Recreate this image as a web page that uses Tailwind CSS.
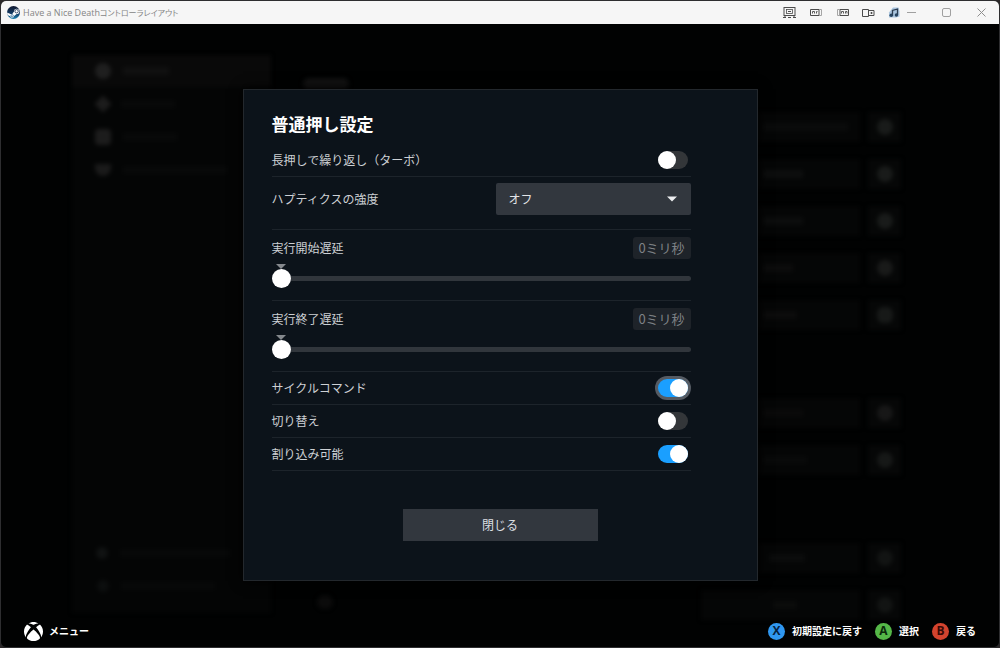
<!DOCTYPE html>
<html lang="ja">
<head>
  <meta charset="UTF-8" />
  <meta name="viewport" content="width=device-width, initial-scale=1.0"/>
  <script src="https://cdn.jsdelivr.net/npm/@tailwindcss/browser@4"></script>
  <title>Have a Nice Deathコントローラレイアウト</title>
</head>
<body class="bg-[#2b2829] font-['Noto_Sans_CJK_JP',sans-serif]">

<div class="min-h-screen flex flex-col rounded-md overflow-hidden border border-[#2e2e30] bg-[#010202]">

  <!-- Title bar -->
  <header class="h-[23px] shrink-0 flex items-center bg-[#f6f6f6] pl-[6px] pr-3">
    <svg class="size-[13px] shrink-0" viewBox="0 0 26 26">
      <defs>
        <linearGradient id="steam" x1="0" y1="0" x2="0" y2="1">
          <stop offset="0" stop-color="#10182f"/>
          <stop offset="0.6" stop-color="#123c66"/>
          <stop offset="1" stop-color="#1c84b4"/>
        </linearGradient>
      </defs>
      <circle cx="13" cy="13" r="13" fill="url(#steam)"/>
      <path d="M0 13l8 3.500a4 4 0 0 1 2.500-.6l3.500-5a5.300 5.300 0 1 1 5.300 5.300l-5 3.600a4 4 0 0 1-7.900.8L1 18z" fill="#fff"/>
      <circle cx="19.200" cy="10.500" r="3.400" fill="#fff" stroke="#14294c" stroke-width="1.600"/>
      <circle cx="10.300" cy="19.600" r="2.400" fill="none" stroke="#17588a" stroke-width="1.400"/>
    </svg>
    <h1 class="ml-[3px] flex items-center text-[9px] leading-none text-[#858585] whitespace-nowrap font-['Open_Sans','Noto_Sans_CJK_JP',sans-serif]">Have a Nice Death<span class="text-[8px] [font-feature-settings:'palt']">コントローラレイアウト</span></h1>

    <div class="ml-auto flex items-center text-[#4c4c4c]">
      <button aria-label="モニター" class="w-[25px] flex justify-center">
        <svg class="w-[13px] h-[11px]" viewBox="0 0 13 11" fill="none" stroke="currentColor"><rect x="1" y="0.500" width="11" height="8" /><rect x="3.500" y="2.500" width="6" height="4" stroke-width="0.800"/><path d="M5 4.500h3M0 10.500h3M5 10.500h3M10 10.500h3M2 8.500v2M11 8.500v2"/></svg>
      </button>
      <button aria-label="左画面" class="w-[27px] flex justify-center">
        <svg class="w-[12px] h-[7px]" viewBox="0 0 12 7" fill="none" stroke="currentColor"><path d="M9 .5H.5v6H9z"/><path d="M9 .5h2.500v6H9" stroke="#a5a5a5"/><path d="M2.500 4.500v-2h2v2M6.500 4.500v-2h1" stroke-width="0.900"/></svg>
      </button>
      <button aria-label="右画面" class="w-[27px] flex justify-center">
        <svg class="w-[12px] h-[7px]" viewBox="0 0 12 7" fill="none" stroke="currentColor"><path d="M3 .5h8.500v6H3z"/><path d="M3 .5H.5v6H3" stroke="#a5a5a5"/><path d="M4.500 4.500v-2h2v2M8.500 4.500v-2h1.500v2" stroke-width="0.900"/></svg>
      </button>
      <button aria-label="画面移動" class="w-[25px] flex justify-center">
        <svg class="w-[13px] h-[8px]" viewBox="0 0 13 8" fill="none" stroke="currentColor"><path d="M.5.5h6v7h-6zM6.500 1.500h5.500v5H6.500z"/><path d="M8.500 4h2M9.500 3v2" stroke-width="1.200"/></svg>
      </button>
      <button aria-label="音声" class="w-[25px] flex justify-center">
        <svg class="w-[12px] h-[11px]" viewBox="0 0 12 11"><path d="M1 5.500L5 .5h5.500l1 4v5L8 10.500H1z" fill="#a9c4de"/><path d="M4.500 8V3.500l5-1.500v6" fill="none" stroke="#2d3d50" stroke-width="1.300"/><circle cx="3.300" cy="8.300" r="1.800" fill="#26435f"/><circle cx="8.400" cy="8" r="1.700" fill="#26435f"/></svg>
      </button>
      <button aria-label="最小化" class="w-[10px] flex justify-center text-[#a0a0a0]">
        <svg class="w-[9px] h-[9px]" viewBox="0 0 9 9" stroke="currentColor"><path d="M0 4.500h9"/></svg>
      </button>
      <button aria-label="最大化" class="w-[60px] flex justify-center text-[#a0a0a0]">
        <svg class="w-[9px] h-[9px]" viewBox="0 0 9 9" fill="none" stroke="currentColor"><rect x=".5" y=".5" width="8" height="8" rx="1.500"/></svg>
      </button>
      <button aria-label="閉じる" class="w-[11px] flex justify-center text-[#8e8e8e]">
        <svg class="w-[9px] h-[9px]" viewBox="0 0 9 9" stroke="currentColor"><path d="M.5.5l8 8M8.500.5l-8 8"/></svg>
      </button>
    </div>
  </header>

  <div class="relative flex-1 flex flex-col">

    <!-- Dimmed page behind the dialog -->
    <div class="absolute inset-0 overflow-hidden flex justify-between pl-[71px] pr-[98px] blur-[2px]" aria-hidden="true">
      <div class="w-[199px] mt-[31px] mb-[34px] flex flex-col bg-[#040505]">
        <div class="h-[32px] flex items-center pl-[23px] gap-3 bg-[#090909]"><i class="size-4 rounded-full bg-[#1f1f1f]"></i><i class="w-[46px] h-2 bg-[#101010]"></i></div>
        <div class="h-[33px] flex items-center pl-[25px] gap-3"><i class="size-3 rotate-45 bg-[#1c1c1c]"></i><i class="w-[54px] h-2 bg-[#080909]"></i></div>
        <div class="h-[33px] flex items-center pl-[23px] gap-3"><i class="size-4 rounded-sm bg-[#1c1c1c]"></i><i class="w-[54px] h-2 bg-[#080909]"></i></div>
        <div class="h-[33px] flex items-center pl-[23px] gap-3"><i class="w-4 h-3 rounded-b-full bg-[#1a1a1a]"></i><i class="w-[104px] h-2 bg-[#080909]"></i></div>
        <div class="mt-auto h-[33px] flex items-center pl-[24px] gap-3"><i class="size-3 rounded-full bg-[#101212]"></i><i class="w-[110px] h-2 bg-[#070808]"></i></div>
        <div class="h-[33px] mb-[11px] flex items-center pl-[25px] gap-3"><i class="size-3 rounded-full bg-[#0c0e0e]"></i><i class="w-[94px] h-2 bg-[#070808]"></i></div>
      </div>
      <div class="flex-1 flex flex-col justify-between items-start pl-[32px] pt-[54px] pb-[38px]">
        <i class="w-[46px] h-[12px] rounded-full bg-[#121212]"></i>
        <i class="ml-[14px] w-[16px] h-[14px] rounded-full bg-[#0b0b0b]"></i>
      </div>
      <div class="w-[200px] pt-[88px] flex flex-col gap-[17px]">
        <div class="h-[30px] flex gap-2"><div class="flex-1 flex items-center pl-[62px] bg-[#050606]"><i class="w-[85px] h-2 bg-[#0a0b0b]"></i></div><div class="w-[33px] grid place-items-center bg-[#060707]"><i class="size-4 rounded-full bg-[#191b1a]"></i></div></div>
        <div class="h-[30px] flex gap-2"><div class="flex-1 flex items-center pl-[62px] bg-[#050606]"><i class="w-[40px] h-2 bg-[#0d0e0e]"></i></div><div class="w-[33px] grid place-items-center bg-[#060707]"><i class="size-4 rounded-full bg-[#191b1a]"></i></div></div>
        <div class="h-[30px] flex gap-2"><div class="flex-1 flex items-center pl-[62px] bg-[#050606]"><i class="w-[40px] h-2 bg-[#0c0d0d]"></i></div><div class="w-[33px] grid place-items-center bg-[#060707]"><i class="size-4 rounded-full bg-[#191b1a]"></i></div></div>
        <div class="h-[30px] flex gap-2"><div class="flex-1 flex items-center pl-[62px] bg-[#050606]"><i class="w-[30px] h-2 bg-[#0c0c0c]"></i></div><div class="w-[33px] grid place-items-center bg-[#060707]"><i class="size-4 rounded-full bg-[#191a19]"></i></div></div>
        <div class="h-[30px] flex gap-2"><div class="flex-1 flex items-center pl-[62px] bg-[#050606]"><i class="w-[34px] h-2 bg-[#0c0c0c]"></i></div><div class="w-[33px] grid place-items-center bg-[#060707]"><i class="size-4 rounded-md bg-[#171918]"></i></div></div>
        <div class="mt-[51px] h-[30px] flex gap-2"><div class="flex-1 flex items-center pl-[62px] bg-[#050606]"><i class="w-[40px] h-2 bg-[#0a0a0a]"></i></div><div class="w-[33px] grid place-items-center bg-[#060707]"><i class="size-4 rounded-full bg-[#171717]"></i></div></div>
        <div class="h-[30px] flex gap-2"><div class="flex-1 flex items-center pl-[62px] bg-[#050606]"><i class="w-[44px] h-2 bg-[#090a0a]"></i></div><div class="w-[33px] grid place-items-center bg-[#060707]"><i class="size-4 rounded-full bg-[#161817]"></i></div></div>
        <div class="mt-[51px] h-[30px] flex gap-2"><div class="flex-1 flex items-center pl-[68px] bg-[#050606]"><i class="w-[36px] h-2 bg-[#0b0c0c]"></i></div><div class="w-[33px] grid place-items-center bg-[#060707]"><i class="size-4 rounded-full bg-[#121413]"></i></div></div>
        <div class="h-[30px] flex gap-2"><div class="flex-1 flex items-center pl-[72px] bg-[#050606]"><i class="w-[24px] h-2 bg-[#0b0c0b]"></i></div><div class="w-[33px] grid place-items-center bg-[#060707]"><i class="size-4 rounded-full bg-[#121413]"></i></div></div>
      </div>
    </div>

    <!-- Dialog -->
    <main class="relative flex-1 flex flex-col items-center pt-[65px] px-4">
      <form role="dialog" aria-labelledby="dialog-title" class="w-full max-w-[515px] border border-[#23282d] bg-[#0c131a] pl-[28px] pr-[66px] pt-[22px] pb-[39px] text-[#cdd0d4] text-[12px] leading-[18px] shadow-[0_0_12px_#000]">
        <h2 id="dialog-title" class="text-[17px] leading-[24px] font-bold text-white">普通押し設定</h2>

        <div class="mt-[7px] h-[34px] flex items-center justify-between pr-[3px] border-b border-[#1d242b]">
          <label for="turbo">長押しで繰り返し（ターボ）</label>
          <input id="turbo" type="checkbox" class="appearance-none w-[30px] h-[18px] rounded-full bg-[#333639] checked:bg-[#1a9fff] before:block before:size-[18px] before:rounded-full before:bg-white checked:before:ml-[12px]">
        </div>

        <div class="h-[53px] flex items-start justify-between pt-[6px] border-b border-[#1d242b]">
          <label for="haptics" class="leading-[32px]">ハプティクスの強度</label>
          <div class="relative w-[195px]">
            <select id="haptics" class="appearance-none block w-full h-[32px] rounded-xs bg-[#32373e] pl-[13px] pr-8 text-[12px] text-[#e2e4e6]">
              <option selected>オフ</option>
              <option>低</option>
              <option>中</option>
              <option>高</option>
            </select>
            <svg class="absolute right-[14px] top-[13px] w-[10px] h-[6px] pointer-events-none" viewBox="0 0 10 6"><path d="M0 .5h10L5 5.500z" fill="#eceef0"/></svg>
          </div>
        </div>

        <div class="h-[71px] pt-[7px] border-b border-[#1d242b]">
          <div class="flex items-center justify-between">
            <label for="start-delay">実行開始遅延</label>
            <output for="start-delay" class="w-[58px] h-[22px] rounded-[3px] bg-[#1e2329] text-center text-[13px] leading-[22px] text-[#7e8286]">0ミリ秒</output>
          </div>
          <svg class="block mt-[5px] ml-[4px] w-[10px] h-[5px]" viewBox="0 0 10 5"><path d="M0 0h10L5 5z" fill="#85898d"/></svg>
          <input id="start-delay" type="range" min="0" max="1000" value="0" class="appearance-none block w-full h-[19px] bg-transparent [&::-webkit-slider-runnable-track]:h-[5px] [&::-webkit-slider-runnable-track]:rounded-full [&::-webkit-slider-runnable-track]:bg-[#31363c] [&::-webkit-slider-thumb]:appearance-none [&::-webkit-slider-thumb]:size-[19px] [&::-webkit-slider-thumb]:-mt-[7px] [&::-webkit-slider-thumb]:rounded-full [&::-webkit-slider-thumb]:bg-white">
        </div>

        <div class="h-[71px] pt-[7px] border-b border-[#1d242b]">
          <div class="flex items-center justify-between">
            <label for="end-delay">実行終了遅延</label>
            <output for="end-delay" class="w-[58px] h-[22px] rounded-[3px] bg-[#1e2329] text-center text-[13px] leading-[22px] text-[#7e8286]">0ミリ秒</output>
          </div>
          <svg class="block mt-[5px] ml-[4px] w-[10px] h-[5px]" viewBox="0 0 10 5"><path d="M0 0h10L5 5z" fill="#85898d"/></svg>
          <input id="end-delay" type="range" min="0" max="1000" value="0" class="appearance-none block w-full h-[19px] bg-transparent [&::-webkit-slider-runnable-track]:h-[5px] [&::-webkit-slider-runnable-track]:rounded-full [&::-webkit-slider-runnable-track]:bg-[#31363c] [&::-webkit-slider-thumb]:appearance-none [&::-webkit-slider-thumb]:size-[19px] [&::-webkit-slider-thumb]:-mt-[7px] [&::-webkit-slider-thumb]:rounded-full [&::-webkit-slider-thumb]:bg-white">
        </div>

        <div class="h-[33px] flex items-center justify-between pr-[3px] border-b border-[#1d242b]">
          <label for="cycle">サイクルコマンド</label>
          <!-- focused control -->
          <input id="cycle" type="checkbox" checked class="appearance-none w-[30px] h-[18px] rounded-full bg-[#333639] ring-3 ring-[#555b63] checked:bg-[#1a9fff] before:block before:size-[18px] before:rounded-full before:bg-white checked:before:ml-[12px]">
        </div>
        <div class="h-[33px] flex items-center justify-between pr-[3px] border-b border-[#1d242b]">
          <label for="toggle">切り替え</label>
          <input id="toggle" type="checkbox" class="appearance-none w-[30px] h-[18px] rounded-full bg-[#333639] checked:bg-[#1a9fff] before:block before:size-[18px] before:rounded-full before:bg-white checked:before:ml-[12px]">
        </div>
        <div class="h-[33px] flex items-center justify-between pr-[3px] border-b border-[#1d242b]">
          <label for="interrupt">割り込み可能</label>
          <input id="interrupt" type="checkbox" checked class="appearance-none w-[30px] h-[18px] rounded-full bg-[#333639] checked:bg-[#1a9fff] before:block before:size-[18px] before:rounded-full before:bg-white checked:before:ml-[12px]">
        </div>

        <div class="mt-[38px] -mr-[38px] flex justify-center">
          <button type="button" class="w-[195px] h-[32px] bg-[#32373e] hover:bg-[#464d56] text-[#dcdfe2]">閉じる</button>
        </div>
      </form>
    </main>

    <!-- Button prompts -->
    <footer class="relative h-[32px] flex items-center pl-[23px] pr-[23px] text-[10px] leading-none font-bold text-white">
      <button class="flex items-center gap-[6px]">
        <svg class="size-[19px]" viewBox="0 0 24 24" fill="#fff">
          <path d="M4.102 21.033C6.211 22.881 8.977 24 12 24c3.026 0 5.789-1.119 7.902-2.967 1.877-1.912-4.316-8.709-7.902-11.417-3.582 2.708-9.779 9.505-7.898 11.417zm11.160-14.406c2.500 2.961 7.484 10.313 6.076 12.912C23.002 17.480 24 14.861 24 12.004c0-3.334-1.365-6.362-3.570-8.536 0 0-.027-.022-.082-.042-.063-.022-.152-.045-.281-.045-.592 0-1.985.434-4.805 3.246zM3.654 3.426c-.057.020-.082.041-.086.042C1.365 5.642 0 8.670 0 12.004c0 2.854.998 5.473 2.661 7.533-1.401-2.605 3.579-9.951 6.080-12.910-2.820-2.813-4.216-3.245-4.806-3.245-.131 0-.223.021-.281.046v-.002zM12 3.551S9.055 1.828 6.755 1.746c-.903-.033-1.454.295-1.521.339C7.379.646 9.659 0 11.984 0H12c2.334 0 4.605.646 6.766 2.085-.068-.046-.615-.372-1.520-.339C14.946 1.828 12 3.545 12 3.545v.006z"/>
        </svg>
        メニュー
      </button>
      <div class="ml-auto flex items-center gap-[13px]">
        <button class="flex items-center gap-[7px]"><span class="size-[17px] rounded-full bg-[#2f97f0] grid place-items-center text-[12px] text-[#06213e] font-['Open_Sans',sans-serif]">X</span>初期設定に戻す</button>
        <button class="flex items-center gap-[7px]"><span class="size-[17px] rounded-full bg-[#55b848] grid place-items-center text-[12px] text-[#0b2a0c] font-['Open_Sans',sans-serif]">A</span>選択</button>
        <button class="flex items-center gap-[7px]"><span class="size-[17px] rounded-full bg-[#d3432e] grid place-items-center text-[12px] text-[#380a06] font-['Open_Sans',sans-serif]">B</span>戻る</button>
      </div>
    </footer>
  </div>
</div>

</body>
</html>
